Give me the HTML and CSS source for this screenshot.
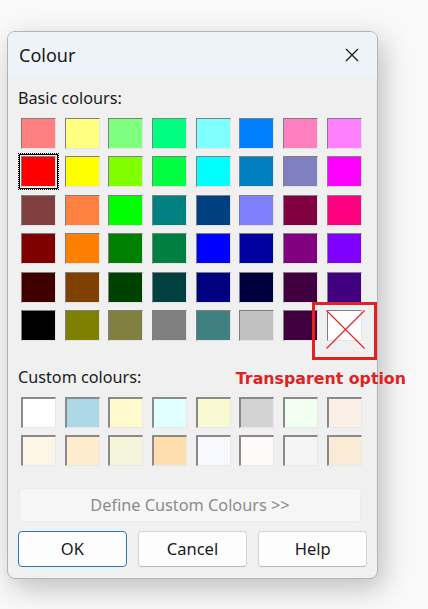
FILE: index.html
```html
<!DOCTYPE html>
<html>
<head>
<meta charset="utf-8">
<link rel="stylesheet" href="styles.css">
</head>
<body>
<div class="dialog">
  <div class="titlebar">
    <span class="title">Colour</span>
    <svg class="close" width="14" height="14" viewBox="0 0 14 14"><path d="M1 1 L13 13 M13 1 L1 13" stroke="#1b1b1b" stroke-width="1.3" fill="none"/></svg>
  </div>
  <div class="content">
    <div class="label label-basic">Basic colours:</div>
    <div class="grid basic">
      <div class="sw" style="background:#ff8080"></div>
      <div class="sw" style="background:#ffff80"></div>
      <div class="sw" style="background:#80ff80"></div>
      <div class="sw" style="background:#00ff80"></div>
      <div class="sw" style="background:#80ffff"></div>
      <div class="sw" style="background:#0080ff"></div>
      <div class="sw" style="background:#ff80c0"></div>
      <div class="sw" style="background:#ff80ff"></div>

      <div class="sw selected" style="background:#ff0000"></div>
      <div class="sw" style="background:#ffff00"></div>
      <div class="sw" style="background:#80ff00"></div>
      <div class="sw" style="background:#00ff40"></div>
      <div class="sw" style="background:#00ffff"></div>
      <div class="sw" style="background:#0080c0"></div>
      <div class="sw" style="background:#8080c0"></div>
      <div class="sw" style="background:#ff00ff"></div>

      <div class="sw" style="background:#804040"></div>
      <div class="sw" style="background:#ff8040"></div>
      <div class="sw" style="background:#00ff00"></div>
      <div class="sw" style="background:#008080"></div>
      <div class="sw" style="background:#004080"></div>
      <div class="sw" style="background:#8080ff"></div>
      <div class="sw" style="background:#800040"></div>
      <div class="sw" style="background:#ff0080"></div>

      <div class="sw" style="background:#800000"></div>
      <div class="sw" style="background:#ff8000"></div>
      <div class="sw" style="background:#008000"></div>
      <div class="sw" style="background:#008040"></div>
      <div class="sw" style="background:#0000ff"></div>
      <div class="sw" style="background:#0000a0"></div>
      <div class="sw" style="background:#800080"></div>
      <div class="sw" style="background:#8000ff"></div>

      <div class="sw" style="background:#400000"></div>
      <div class="sw" style="background:#804000"></div>
      <div class="sw" style="background:#004000"></div>
      <div class="sw" style="background:#004040"></div>
      <div class="sw" style="background:#000080"></div>
      <div class="sw" style="background:#000040"></div>
      <div class="sw" style="background:#400040"></div>
      <div class="sw" style="background:#400080"></div>

      <div class="sw" style="background:#000000"></div>
      <div class="sw" style="background:#808000"></div>
      <div class="sw" style="background:#808040"></div>
      <div class="sw" style="background:#808080"></div>
      <div class="sw" style="background:#408080"></div>
      <div class="sw" style="background:#c0c0c0"></div>
      <div class="sw" style="background:#400040"></div>
      <div class="sw transparent">
        <svg class="cross" width="39" height="39" viewBox="0 0 39 39"><path d="M0.5 0.5 L38.5 38.5 M38.5 0.5 L0.5 38.5" stroke="#e3262a" stroke-width="1.2" fill="none"/></svg>
        <div class="mark"></div>
        <div class="note">Transparent option</div>
      </div>
    </div>

    <div class="label label-custom">Custom colours:</div>
    <div class="grid custom">
      <div class="sw" style="background:#ffffff"></div>
      <div class="sw" style="background:#add8e6"></div>
      <div class="sw" style="background:#fffacd"></div>
      <div class="sw" style="background:#e0ffff"></div>
      <div class="sw" style="background:#fafad2"></div>
      <div class="sw" style="background:#d3d3d3"></div>
      <div class="sw" style="background:#f0fff0"></div>
      <div class="sw" style="background:#faf0e6"></div>

      <div class="sw" style="background:#fdf5e6"></div>
      <div class="sw" style="background:#ffebcd"></div>
      <div class="sw" style="background:#f5f5dc"></div>
      <div class="sw" style="background:#ffdead"></div>
      <div class="sw" style="background:#f8f8ff"></div>
      <div class="sw" style="background:#fffafa"></div>
      <div class="sw" style="background:#f5f5f5"></div>
      <div class="sw" style="background:#faebd7"></div>
    </div>

    <div class="define">Define Custom Colours &gt;&gt;</div>

    <div class="buttons">
      <div class="btn default">OK</div>
      <div class="btn">Cancel</div>
      <div class="btn">Help</div>
    </div>
  </div>
</div>
</body>
</html>
```

FILE: styles.css
```css
html, body {
  margin: 0;
  padding: 0;
}
body {
  background: #f9f9f9;
  width: 428px;
  height: 609px;
  overflow: hidden;
  font-family: "Noto Sans", "Open Sans", sans-serif;
  color: #1a1a1a;
}
.dialog {
  box-sizing: border-box;
  margin: 31px 0 0 7px;
  width: 371px;
  height: 548px;
  border: 1px solid #b4b4b4;
  border-radius: 8px;
  background: #f0f0f0;
  box-shadow: 5px 9px 28px rgba(0, 0, 0, 0.24);
}
.titlebar {
  height: 45px;
  background: #eef2f9;
  border-radius: 7px 7px 0 0;
  display: flex;
  align-items: center;
  justify-content: space-between;
  padding: 0 18px 0 11px;
}
.title {
  font-size: 18px;
  line-height: 24px;
  color: #1a1a1a;
}
.close {
  display: block;
}
.content {
  padding: 0 10px;
}
.label {
  font-size: 16.2px;
  line-height: 20px;
}
.label-basic {
  margin-top: 11px;
}
.label-custom {
  margin-top: 26px;
}
.grid {
  display: grid;
  grid-template-columns: repeat(8, 35px);
  grid-auto-rows: 31px;
  column-gap: 8.7px;
  row-gap: 7.4px;
  margin-left: 3px;
  margin-top: 10px;
}
.custom {
  row-gap: 7px;
}
.sw {
  box-sizing: border-box;
  border: 1px solid;
  border-color: #7f7f7f #e4e4e4 #e4e4e4 #7f7f7f;
  position: relative;
}
.custom .sw {
  border-width: 2px 1px 1px 2px;
  border-color: #8a8a8a #e8e8e8 #e8e8e8 #8a8a8a;
}
.selected::before {
  content: "";
  position: absolute;
  inset: -3px;
  border: 1px solid #000;
  outline: 1px dotted #000;
}
.transparent {
  background: #ffffff;
}
.cross {
  position: absolute;
  left: -2px;
  top: -1px;
}
.mark {
  position: absolute;
  left: -16px;
  top: -9px;
  width: 65px;
  height: 58px;
  box-sizing: border-box;
  border: 3px solid #e02222;
}
.note {
  position: absolute;
  left: -92px;
  top: 59px;
  white-space: nowrap;
  font-family: "DejaVu Sans", sans-serif;
  font-weight: bold;
  font-size: 15.8px;
  line-height: 18px;
  color: #e02222;
}
.define {
  box-sizing: border-box;
  margin: 22px 0 0 1px;
  width: 342px;
  height: 34px;
  border-radius: 4px;
  background: #f6f6f6;
  border: 1px solid #ececec;
  color: #8b8b8b;
  font-size: 16.3px;
  display: flex;
  align-items: center;
  justify-content: center;
}
.buttons {
  display: flex;
  gap: 11.5px;
  margin-top: 9px;
}
.btn {
  box-sizing: border-box;
  width: 109px;
  height: 36px;
  border-radius: 4px;
  background: #fdfdfd;
  border: 1px solid #d4d4d4;
  border-bottom-color: #b8b8b8;
  display: flex;
  align-items: center;
  justify-content: center;
  font-size: 16.5px;
  color: #1a1a1a;
}
.btn.default {
  border: 1px solid #2b74c4;
}
```
